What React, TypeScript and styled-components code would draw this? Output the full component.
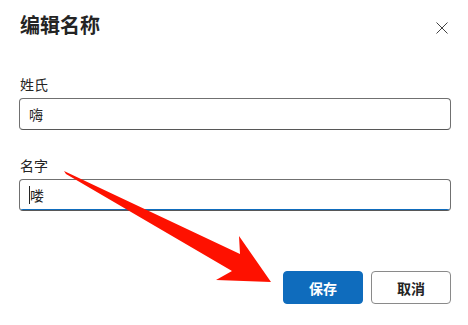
import React from "react";
import styled, { createGlobalStyle } from "styled-components";

const Global = createGlobalStyle`
  html, body { margin: 0; padding: 0; background: #ffffff; }
  body { font-family: "Noto Sans CJK SC", "Noto Sans", sans-serif; color: #242424; }
  * { box-sizing: border-box; }
`;

const Dialog = styled.div`
  position: relative;
  width: 468px;
  height: 325px;
  padding: 11px 17px 0 19px;
  display: flex;
  flex-direction: column;
`;

const Header = styled.div`
  display: flex;
  align-items: center;
  justify-content: space-between;
  height: 28px;
`;

const Title = styled.h2`
  margin: 0 0 0 1px;
  font-size: 20px;
  line-height: 28px;
  font-weight: 700;
  color: #242424;
`;

const CloseButton = styled.button`
  border: none;
  background: transparent;
  padding: 0;
  width: 20px;
  height: 20px;
  display: flex;
  align-items: center;
  justify-content: center;
  margin-right: -1px;
  margin-top: 6px;
`;

const Field = styled.div<{ $top: number }>`
  display: flex;
  flex-direction: column;
  margin-top: ${(p) => p.$top}px;
`;

const Label = styled.label`
  font-size: 14px;
  line-height: 20px;
  margin: 0 0 4px 1px;
  color: #242424;
`;

const InputBox = styled.div<{ $focused?: boolean }>`
  height: 32px;
  border: 1px solid #707070;
  border-bottom-color: #575757;
  border-radius: 4px;
  padding: 0 9px;
  display: flex;
  align-items: center;
  font-size: 14px;
  color: #242424;
  position: relative;
  overflow: hidden;
  ${(p) =>
    p.$focused &&
    `
    &::after {
      content: "";
      position: absolute;
      left: 0;
      right: 0;
      bottom: -1px;
      height: 2px;
      background: #0f6cbd;
    }
  `}
`;

const Caret = styled.span`
  display: inline-block;
  width: 1px;
  height: 18px;
  background: #242424;
  margin-right: 0;
`;

const Actions = styled.div`
  display: flex;
  justify-content: flex-end;
  gap: 8px;
  margin-top: 60px;
`;

const Button = styled.button<{ $primary?: boolean }>`
  width: 80px;
  height: 33px;
  border-radius: 4px;
  font-family: "Noto Sans CJK SC", "Noto Sans", sans-serif;
  font-size: 14px;
  font-weight: 700;
  border: 1px solid ${(p) => (p.$primary ? "#0f6cbd" : "#8a8a8a")};
  background: ${(p) => (p.$primary ? "#0f6cbd" : "#ffffff")};
  color: ${(p) => (p.$primary ? "#ffffff" : "#242424")};
  padding: 0;
`;

const ArrowOverlay = styled.svg`
  position: absolute;
  left: 0;
  top: 0;
  pointer-events: none;
`;

export default function App() {
  return (
    <>
      <Global />
      <Dialog>
        <Header>
          <Title>编辑名称</Title>
          <CloseButton aria-label="关闭">
            <svg width="12" height="12" viewBox="0 0 12 12">
              <path d="M0.5 0.5 L11.5 11.5 M11.5 0.5 L0.5 11.5" stroke="#424242" strokeWidth="1" />
            </svg>
          </CloseButton>
        </Header>
        <Field $top={35}>
          <Label>姓氏</Label>
          <InputBox>嗨</InputBox>
        </Field>
        <Field $top={25}>
          <Label>名字</Label>
          <InputBox $focused>
            <Caret />
            喽
          </InputBox>
        </Field>
        <Actions>
          <Button $primary>保存</Button>
          <Button>取消</Button>
        </Actions>
        <ArrowOverlay width="468" height="325" viewBox="0 0 468 325">
          <polygon
            points="64,171 240,254 239,236 271,282 216,280 232,271 66,174"
            fill="#fe1100"
          />
        </ArrowOverlay>
      </Dialog>
    </>
  );
}
